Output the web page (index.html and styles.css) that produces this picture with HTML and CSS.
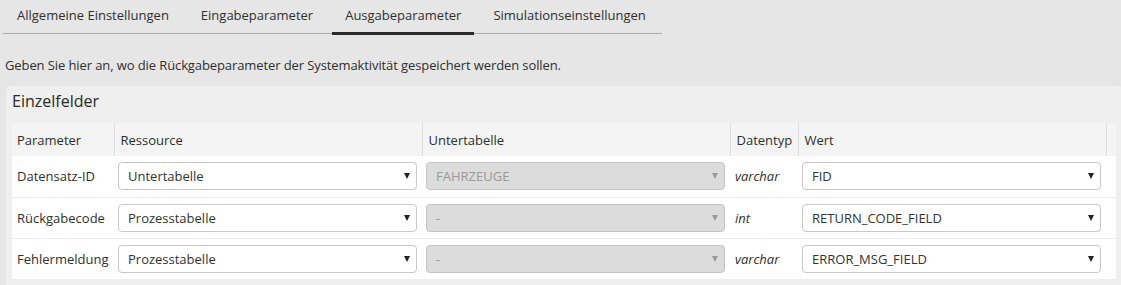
FILE: index.html
```html
<!DOCTYPE html>
<html lang="de">
<head>
<meta charset="utf-8">
<title>Ausgabeparameter</title>
<link rel="stylesheet" href="styles.css">
</head>
<body>
<div class="page">
  <ul class="tabs">
    <li class="tab">Allgemeine Einstellungen</li>
    <li class="tab">Eingabeparameter</li>
    <li class="tab active">Ausgabeparameter</li>
    <li class="tab">Simulationseinstellungen</li>
  </ul>
  <p class="desc">Geben Sie hier an, wo die Rückgabeparameter der Systemaktivität gespeichert werden sollen.</p>
  <section class="panel">
    <h2 class="panel-title">Einzelfelder</h2>
    <table class="grid">
      <colgroup>
        <col class="c-param"><col class="c-res"><col class="c-sub"><col class="c-type"><col class="c-val"><col class="c-end">
      </colgroup>
      <thead>
        <tr><th>Parameter</th><th>Ressource</th><th>Untertabelle</th><th>Datentyp</th><th>Wert</th><th></th></tr>
      </thead>
      <tbody>
        <tr>
          <td class="txt">Datensatz-ID</td>
          <td class="sel"><div class="select"><span>Untertabelle</span><i class="arrow"></i></div></td>
          <td class="sel"><div class="select disabled"><span>FAHRZEUGE</span><i class="arrow"></i></div></td>
          <td class="txt type">varchar</td>
          <td class="sel"><div class="select"><span>FID</span><i class="arrow"></i></div></td>
          <td></td>
        </tr>
        <tr>
          <td class="txt">Rückgabecode</td>
          <td class="sel"><div class="select"><span>Prozesstabelle</span><i class="arrow"></i></div></td>
          <td class="sel"><div class="select disabled"><span>-</span><i class="arrow"></i></div></td>
          <td class="txt type">int</td>
          <td class="sel"><div class="select"><span>RETURN_CODE_FIELD</span><i class="arrow"></i></div></td>
          <td></td>
        </tr>
        <tr>
          <td class="txt">Fehlermeldung</td>
          <td class="sel"><div class="select"><span>Prozesstabelle</span><i class="arrow"></i></div></td>
          <td class="sel"><div class="select disabled"><span>-</span><i class="arrow"></i></div></td>
          <td class="txt type">varchar</td>
          <td class="sel"><div class="select"><span>ERROR_MSG_FIELD</span><i class="arrow"></i></div></td>
          <td></td>
        </tr>
      </tbody>
    </table>
  </section>
</div>
</body>
</html>
```
FILE: styles.css
```css
* { box-sizing: border-box; }
html, body {
  margin: 0;
  padding: 0;
  background: #e6e6e6;
  font-family: "Open Sans", "Liberation Sans", sans-serif;
  font-size: 13px;
  color: #2f2f2f;
  overflow: hidden;
}
.page {
  padding-left: 5px;
  width: 1140px;
}
.tabs {
  list-style: none;
  margin: 0 0 0 -2px;
  padding: 0 0 0 1px;
  display: flex;
  gap: 6px;
  width: 659px;
  border-bottom: 1px solid #aaa;
  height: 34px;
}
.tab {
  padding: 6px 13px 8px;
  line-height: 18px;
  border-bottom: 3px solid transparent;
  margin-bottom: -2px;
  white-space: nowrap;
}
.tab.active {
  border-bottom-color: #2b2b2b;
}
.desc {
  margin: 22px 0 12px -5px;
  padding-left: 5px;
  line-height: 18px;
  letter-spacing: -0.1px;
}
.panel {
  margin-left: 1px;
  width: 1116px;
  background: #efefef;
  border-radius: 4px;
  padding: 4px 6px 10px;
}
.panel-title {
  margin: 0 0 11px;
  font-size: 16px;
  font-weight: normal;
  line-height: 22px;
  color: #2a2a2a;
}
.grid {
  border-collapse: collapse;
  table-layout: fixed;
  width: 1104px;
}
.c-param { width: 102px; }
.c-res { width: 308px; }
.c-sub { width: 308px; }
.c-type { width: 68px; }
.c-val { width: 308px; }
.c-end { width: 10px; }
.grid thead th {
  background: #f4f4f4;
  font-weight: normal;
  text-align: left;
  height: 33px;
  padding: 0 5px 0 6px;
  border-left: 1px solid #dcdcdc;
  white-space: nowrap;
}
.grid thead th:first-child { border-left: none; padding-left: 5px; }
.grid tbody td {
  background: #fff;
  height: 41px;
  border-top: 1px solid #ececec;
  padding: 0;
}
.grid tbody tr:first-child td { border-top: none; }
.grid td.txt { padding: 0 5px; white-space: nowrap; }
.grid td.type { font-style: italic; }
.grid td.sel { padding: 0 5px 0 4px; }
.select {
  display: flex;
  align-items: center;
  justify-content: space-between;
  height: 28px;
  background: #fff;
  border: 1px solid #c8c8c8;
  border-radius: 4px;
  padding: 0 6px 0 9px;
  color: #333;
}
.select.disabled {
  background: #dcdcdc;
  color: #999;
  border-color: #c4c4c4;
}
.arrow {
  width: 0;
  height: 0;
  border-left: 3px solid transparent;
  border-right: 3px solid transparent;
  border-top: 6px solid #222;
}
.select.disabled .arrow { border-top-color: #9a9a9a; }
```
